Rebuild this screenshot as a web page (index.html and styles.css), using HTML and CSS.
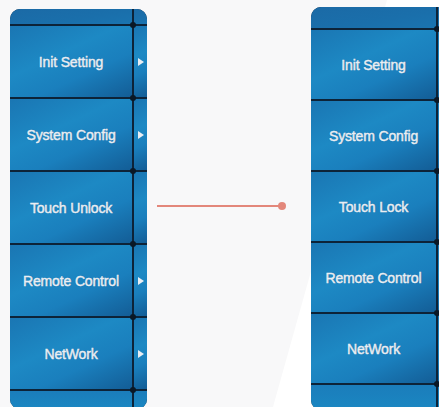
FILE: index.html
```html
<!DOCTYPE html>
<html>
<head>
<meta charset="utf-8">
<link rel="stylesheet" href="styles.css">
</head>
<body>
<div class="stage">
  <div class="panel panel-left">
    <div class="cell strip"></div><div class="side strip"></div>
    <div class="cell">Init Setting</div><div class="side dot arrow"></div>
    <div class="cell">System Config</div><div class="side dot arrow"></div>
    <div class="cell">Touch Unlock</div><div class="side dot"></div>
    <div class="cell">Remote Control</div><div class="side dot arrow"></div>
    <div class="cell">NetWork</div><div class="side dot arrow"></div>
    <div class="cell strip"></div><div class="side dot strip"></div>
  </div>
  <div class="connector"><span class="knob"></span></div>
  <div class="panel panel-right">
    <div class="cell strip"></div><div class="side strip"></div>
    <div class="cell">Init Setting</div><div class="side dot"></div>
    <div class="cell">System Config</div><div class="side dot"></div>
    <div class="cell">Touch Lock</div><div class="side dot"></div>
    <div class="cell">Remote Control</div><div class="side dot"></div>
    <div class="cell">NetWork</div><div class="side dot"></div>
    <div class="cell strip"></div><div class="side dot strip"></div>
  </div>
</div>
</body>
</html>
```
FILE: styles.css
```css
html, body {
  margin: 0;
  padding: 0;
  width: 439px;
  height: 407px;
  overflow: hidden;
  background: #f8f8f9;
  font-family: "Liberation Sans", Arial, sans-serif;
}
body { position: relative; }
body::before {
  content: "";
  position: absolute;
  inset: 0;
  background: #ffffff;
  clip-path: polygon(387px 0, 439px 0, 439px 407px, 273px 407px);
}
.stage {
  position: relative;
  display: flex;
  align-items: flex-start;
}
.panel {
  flex-shrink: 0;
  display: grid;
  gap: 2px;
  background: #0d2338;
  border-radius: 10px;
  overflow: hidden;
}
.panel-left {
  margin-left: 10px;
  margin-top: 9px;
  grid-template-columns: 122px 13px;
  grid-template-rows: 15px repeat(5, 71px) 18px;
}
.panel-right {
  margin-top: 7px;
  grid-template-columns: 125px 12px;
  grid-template-rows: 21px repeat(5, 69px) 25px;
  border-top-right-radius: 0;
  border-bottom-right-radius: 0;
}
.cell, .side {
  position: relative;
  background: linear-gradient(155deg, #1a76b3 0%, #1d89c4 40%, #1a7fbd 65%, #135d96 100%);
}
.cell {
  display: flex;
  align-items: center;
  justify-content: center;
  color: #e9eef4;
  font-size: 14px;
  letter-spacing: -0.15px;
  -webkit-text-stroke: 0.45px #e9eef4;
  text-shadow: 0 0 1px rgba(10, 40, 80, 0.5);
  white-space: nowrap;
}
.strip {
  background: linear-gradient(170deg, #1b6aa6 0%, #1a6fab 60%, #1a74b0 100%);
}
.panel-left > .strip:nth-last-child(-n+2),
.panel-right > .strip:nth-last-child(-n+2) {
  background: linear-gradient(180deg, #1b7dbb 0%, #1a87c2 100%);
}
.dot::before {
  content: "";
  position: absolute;
  left: -4px;
  top: -4px;
  width: 6px;
  height: 6px;
  border-radius: 50%;
  background: #0a1826;
  z-index: 2;
}
.arrow::after {
  content: "";
  position: absolute;
  left: 4px;
  top: 50%;
  margin-top: -4px;
  border-left: 6px solid #e9eef4;
  border-top: 4px solid transparent;
  border-bottom: 4px solid transparent;
}
.connector {
  flex-shrink: 0;
  position: relative;
  margin-left: 10px;
  margin-top: 205px;
  width: 125px;
  height: 2px;
  background: #e3877b;
  margin-right: 29px;
}
.knob {
  position: absolute;
  right: -4px;
  top: -3px;
  width: 8px;
  height: 8px;
  border-radius: 50%;
  background: #e3877b;
}
```
